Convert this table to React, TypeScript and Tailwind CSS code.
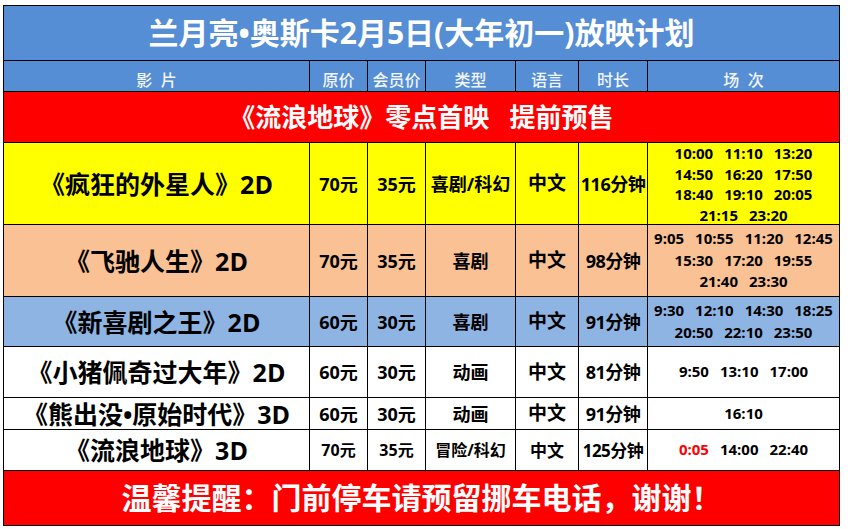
import React from "react";

type Movie = {
  name: string;
  price: string;
  member: string;
  genre: string;
  lang: string;
  dur: string;
  times: string[][];
  bg: string;
  h: string;
  top?: boolean;
  small?: boolean;
  redFirst?: boolean;
};

const movies: Movie[] = [
  {
    name: "《疯狂的外星人》2D",
    price: "70元",
    member: "35元",
    genre: "喜剧/科幻",
    lang: "中文",
    dur: "116分钟",
    times: [
      ["10:00", "11:10", "13:20"],
      ["14:50", "16:20", "17:50"],
      ["18:40", "19:10", "20:05"],
      ["21:15", "23:20"],
    ],
    bg: "bg-[#ffff00]",
    h: "h-[81px]",
    top: true,
  },
  {
    name: "《飞驰人生》2D",
    price: "70元",
    member: "35元",
    genre: "喜剧",
    lang: "中文",
    dur: "98分钟",
    times: [
      ["9:05", "10:55", "11:20", "12:45"],
      ["15:30", "17:20", "19:55"],
      ["21:40", "23:30"],
    ],
    bg: "bg-[#f9c194]",
    h: "h-[71px]",
  },
  {
    name: "《新喜剧之王》2D",
    price: "60元",
    member: "30元",
    genre: "喜剧",
    lang: "中文",
    dur: "91分钟",
    times: [
      ["9:30", "12:10", "14:30", "18:25"],
      ["20:50", "22:10", "23:50"],
    ],
    bg: "bg-[#8db4e2]",
    h: "h-[49px]",
  },
  {
    name: "《小猪佩奇过大年》2D",
    price: "60元",
    member: "30元",
    genre: "动画",
    lang: "中文",
    dur: "81分钟",
    times: [["9:50", "13:10", "17:00"]],
    bg: "bg-white",
    h: "h-[50px]",
  },
  {
    name: "《熊出没•原始时代》3D",
    price: "60元",
    member: "30元",
    genre: "动画",
    lang: "中文",
    dur: "91分钟",
    times: [["16:10"]],
    bg: "bg-white",
    h: "h-[31px]",
  },
  {
    name: "《流浪地球》3D",
    price: "70元",
    member: "35元",
    genre: "冒险/科幻",
    lang: "中文",
    dur: "125分钟",
    times: [["0:05", "14:00", "22:40"]],
    bg: "bg-white",
    h: "h-[40px]",
    small: true,
    redFirst: true,
  },
];

const font = { fontFamily: "'Open Sans', 'Noto Sans CJK SC', sans-serif" };

function Cell({
  children,
  className = "",
}: {
  children?: React.ReactNode;
  className?: string;
}) {
  return (
    <div
      className={`flex items-center justify-center whitespace-nowrap text-black font-bold ${className}`}
    >
      {children}
    </div>
  );
}

export default function App() {
  return (
    <div className="w-[856px] h-[529px] bg-white pt-[5px] pl-[3px]" style={font}>
      <div className="w-[837px] grid grid-cols-[305px_57px_57px_89px_62px_68px_191px] gap-px p-px bg-black">
        {/* Title */}
        <div className="col-span-7 h-[54px] bg-[#558ed5] flex items-center justify-center text-white font-bold text-[30px] leading-none whitespace-nowrap">
          兰月亮•奥斯卡2月5日(大年初一)放映计划
        </div>

        {/* Header */}
        {["影  片", "原价", "会员价", "类型", "语言", "时长", "场  次"].map((t) => (
          <div
            key={t}
            className="h-[30px] bg-[#558ed5] flex items-center justify-center pt-[8px] text-[#f2f5fb] text-[16px] leading-none whitespace-pre font-medium"
          >
            {t}
          </div>
        ))}

        {/* Red banner */}
        <div className="col-span-7 h-[50px] bg-[#ff0000] flex items-center justify-center text-white font-bold text-[26px] leading-none whitespace-pre">
          《流浪地球》零点首映   提前预售
        </div>

        {movies.map((m) => (
          <React.Fragment key={m.name}>
            <Cell className={`${m.bg} ${m.h} text-[25px] leading-[28px]`}>{m.name}</Cell>
            <Cell className={`${m.bg} ${m.h} ${m.small ? "text-[16px]" : "text-[18px]"} leading-none`}>
              {m.price}
            </Cell>
            <Cell className={`${m.bg} ${m.h} ${m.small ? "text-[16px]" : "text-[18px]"} leading-none`}>
              {m.member}
            </Cell>
            <Cell className={`${m.bg} ${m.h} ${m.small ? "text-[16px]" : "text-[18px]"} leading-none`}>
              {m.genre}
            </Cell>
            <Cell className={`${m.bg} ${m.h} ${m.small ? "text-[17px]" : "text-[19px]"} leading-none`}>
              {m.lang}
            </Cell>
            <Cell className={`${m.bg} ${m.h} ${m.small ? "text-[17px]" : "text-[18px]"} leading-none tracking-[-0.5px]`}>
              {m.dur}
            </Cell>
            <div
              className={`${m.bg} ${m.h} flex flex-col ${m.top ? "justify-start leading-[20.5px]" : "justify-center leading-[21.6px]"} items-center overflow-hidden text-[15px] font-bold text-black`}
            >
              {m.times.map((line, i) => (
                <div key={i} className="flex gap-[11px] whitespace-nowrap">
                  {line.map((t, j) => (
                    <span
                      key={t}
                      className={m.redFirst && i === 0 && j === 0 ? "text-[#ff0000]" : ""}
                    >
                      {t}
                    </span>
                  ))}
                </div>
              ))}
            </div>
          </React.Fragment>
        ))}

        {/* Footer */}
        <div className="col-span-7 h-[54px] bg-[#ff0000] flex items-center justify-center text-white font-bold text-[30px] leading-none whitespace-nowrap">
          温馨提醒：门前停车请预留挪车电话，谢谢！
        </div>
      </div>
    </div>
  );
}
